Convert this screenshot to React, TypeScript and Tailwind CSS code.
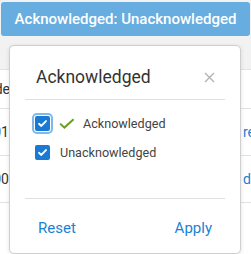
import React, { useState } from 'react';

const font = { fontFamily: 'Roboto, "Liberation Sans", sans-serif' };

const CheckBox: React.FC<{ checked: boolean; focused?: boolean; onChange: () => void }> = ({ checked, focused, onChange }) => (
  <button
    onClick={onChange}
    className={`flex h-[15px] w-[15px] items-center justify-center rounded-[2px] ${checked ? 'bg-[#1a79d3]' : 'border border-[#999] bg-white'} ${focused ? 'ring-2 ring-[#7fb8ea] ring-offset-1' : ''}`}
  >
    {checked && (
      <svg width="11" height="11" viewBox="0 0 12 12" fill="none">
        <path d="M2.2 6.3l2.5 2.4 5.1-5.4" stroke="white" strokeWidth="2" strokeLinecap="round" strokeLinejoin="round" />
      </svg>
    )}
  </button>
);

const App: React.FC = () => {
  const [ack, setAck] = useState(true);
  const [unack, setUnack] = useState(true);

  return (
    <div className="relative h-[254px] w-[251px] overflow-hidden bg-white" style={font}>
      {/* filter bar */}
      <div className="bg-[#f2f2f2] px-[1px] pt-[2px] h-[69px]">
        <button className="flex h-[34px] w-full items-center justify-center rounded-[3px] bg-[#68ade0] text-[15px] font-medium text-white">
          Acknowledged: Unacknowledged
        </button>
      </div>

      {/* table behind */}
      <div className="border-t border-[#e2e2e2] text-[14px] text-[#333]">
        <div className="flex h-[39px] items-center border-b border-[#e2e2e2]">
          <div className="flex w-[10px] justify-end overflow-hidden whitespace-nowrap">Code</div>
        </div>
        <div className="flex h-[47px] items-center border-b border-[#e2e2e2]">
          <div className="flex w-[9px] justify-end overflow-hidden whitespace-nowrap">2001</div>
          <div className="ml-auto w-[8px] overflow-hidden whitespace-nowrap text-[#1a7fd4]">review</div>
        </div>
        <div className="flex h-[47px] items-center border-b border-[#e2e2e2]">
          <div className="flex w-[9px] justify-end overflow-hidden whitespace-nowrap">1000</div>
          <div className="ml-auto w-[8px] overflow-hidden whitespace-nowrap text-[#1a7fd4]">due</div>
        </div>
      </div>

      {/* filter popover */}
      <div className="absolute left-[9px] top-[45px] flex h-[209px] w-[232px] flex-col rounded-[5px] border border-[#cfcfcf] bg-white px-[15px] shadow-[0_1px_4px_rgba(0,0,0,0.12)]">
        <div className="flex h-[54px] items-center justify-between pl-[11px] pr-[10px] pt-[10px] border-b border-[#e0e0e0]">
          <span className="text-[17.5px] text-[#333]">Acknowledged</span>
          <svg width="11" height="11" viewBox="0 0 11 11">
            <path d="M1 1l9 9M10 1l-9 9" stroke="#b3b3b3" strokeWidth="1.4" />
          </svg>
        </div>
        <div className="flex h-[99px] flex-col gap-[10px] pl-[10px] pt-[14px] border-b border-[#e0e0e0] text-[12.6px] leading-[19px] text-[#444]">
          <label className="flex items-center">
            <CheckBox checked={ack} focused onChange={() => setAck(!ack)} />
            <svg className="ml-[9px]" width="16" height="11" viewBox="0 0 16 11" fill="none">
              <path d="M1.2 5.6l4.2 4 9.2-8.4" stroke="#6a9e1f" strokeWidth="2" />
            </svg>
            <span className="ml-[8px]">Acknowledged</span>
          </label>
          <label className="flex items-center">
            <CheckBox checked={unack} onChange={() => setUnack(!unack)} />
            <span className="ml-[10px]">Unacknowledged</span>
          </label>
        </div>
        <div className="flex flex-1 items-center justify-between px-[13px] pt-[4px] text-[15px] text-[#1b82d4]">
          <button>Reset</button>
          <button>Apply</button>
        </div>
      </div>
    </div>
  );
};

export default App;
